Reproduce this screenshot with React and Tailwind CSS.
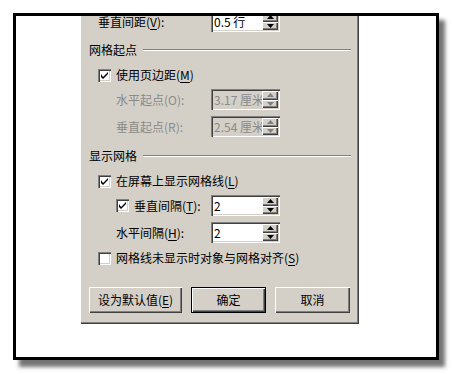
import React from "react";

const FONT = { fontFamily: '"Noto Sans CJK SC", "Liberation Sans", sans-serif' };

function U({ children }) {
  return <span className="underline underline-offset-2">{children}</span>;
}

function Spin({ disabled }) {
  const c = disabled ? "#808080" : "#000";
  const btn =
    "flex-1 flex items-center justify-center bg-[#d4d0c8] shadow-[inset_1px_1px_#fff,inset_-1px_-1px_#404040,inset_-2px_-2px_#808080]";
  return (
    <div className="absolute right-[2px] top-[2px] bottom-[2px] w-[16px] flex flex-col">
      <div className={btn}>
        <svg width="7" height="4" viewBox="0 0 7 4">
          <path d="M3.5 0 L7 4 L0 4 Z" fill={c} />
        </svg>
      </div>
      <div className={btn}>
        <svg width="7" height="4" viewBox="0 0 7 4">
          <path d="M0 0 L7 0 L3.5 4 Z" fill={c} />
        </svg>
      </div>
    </div>
  );
}

function Field({ value, disabled }) {
  return (
    <div
      className={
        "relative w-[69px] h-[21px] shadow-[inset_1px_1px_#808080,inset_2px_2px_#404040,inset_-1px_-1px_#fff,inset_-2px_-2px_#d4d0c8] " +
        (disabled ? "bg-[#d4d0c8] text-[#8a8a8a]" : "bg-white text-black")
      }
    >
      <div className="absolute left-[3px] top-[2px] bottom-[2px] right-[18px] overflow-hidden whitespace-nowrap flex items-center text-[12px] leading-none">
        {value}
      </div>
      <Spin disabled={disabled} />
    </div>
  );
}

function Check({ checked }) {
  return (
    <div className="w-[13px] h-[13px] shrink-0 bg-white shadow-[inset_1px_1px_#808080,inset_2px_2px_#404040,inset_-1px_-1px_#fff,inset_-2px_-2px_#d4d0c8] flex items-center justify-center">
      {checked && (
        <svg width="7" height="7" viewBox="0 0 7 7">
          <path d="M0 2 L0 5 L2 7 L7 2 L7 0 L2 5 Z" fill="#000" />
        </svg>
      )}
    </div>
  );
}

function Section({ children, className = "" }) {
  return (
    <div className={"flex items-center h-[16px] pl-[9px] pr-[8px] " + className}>
      <span className="text-[12px] leading-none whitespace-nowrap">{children}</span>
      <div className="flex-1 ml-[6px] h-[2px] border-t border-t-[#808080] border-b border-b-white" />
    </div>
  );
}

function Btn({ children, w, def }) {
  return (
    <div
      className={
        "h-[26px] flex items-center justify-center text-[12px] leading-none bg-[#d4d0c8] " +
        w +
        " " +
        (def
          ? "border border-black shadow-[inset_1px_1px_#fff,inset_-1px_-1px_#404040,inset_-2px_-2px_#808080]"
          : "shadow-[inset_1px_1px_#fff,inset_-1px_-1px_#404040,inset_-2px_-2px_#808080]")
      }
    >
      {children}
    </div>
  );
}

export default function App() {
  return (
    <div className="w-[452px] h-[374px] bg-white pt-[13px] pl-[13px]" style={FONT}>
      <div className="w-[426px] h-[347px] border-[3px] border-black bg-white shadow-[6px_7px_4px_rgba(0,0,0,0.55)] overflow-hidden">
        <div className="ml-[64px] w-[279px] h-[308px] bg-[#d4d0c8] text-black shadow-[inset_1px_0_#fff,inset_-1px_-1px_#404040,inset_-2px_-2px_#808080] flex flex-col">
          {/* row 1 */}
          <div className="flex items-center h-[21px] mt-[-5px] pl-[18px]">
            <span className="w-[113px] text-[12px] leading-none whitespace-nowrap">
              垂直间距(<U>V</U>):
            </span>
            <Field value="0.5 行" />
          </div>

          <Section className="mt-[10px]">网格起点</Section>

          <div className="flex items-center h-[16px] mt-[9px] pl-[18px]">
            <Check checked />
            <span className="ml-[5px] text-[12px] leading-none whitespace-nowrap">
              使用页边距(<U>M</U>)
            </span>
          </div>

          <div className="flex items-center h-[21px] mt-[6px] pl-[36px]">
            <span className="w-[95px] text-[12px] leading-none whitespace-nowrap text-[#8a8a8a]">
              水平起点(O):
            </span>
            <Field value="3.17 厘米" disabled />
          </div>

          <div className="flex items-center h-[21px] mt-[6px] pl-[36px]">
            <span className="w-[95px] text-[12px] leading-none whitespace-nowrap text-[#8a8a8a]">
              垂直起点(R):
            </span>
            <Field value="2.54 厘米" disabled />
          </div>

          <Section className="mt-[11px]">显示网格</Section>

          <div className="flex items-center h-[16px] mt-[9px] pl-[18px]">
            <Check checked />
            <span className="ml-[5px] text-[12px] leading-none whitespace-nowrap">
              在屏幕上显示网格线(<U>L</U>)
            </span>
          </div>

          <div className="flex items-center h-[21px] mt-[6px] pl-[36px]">
            <Check checked />
            <span className="ml-[5px] w-[77px] text-[12px] leading-none whitespace-nowrap">
              垂直间隔(<U>T</U>):
            </span>
            <Field value="2" />
          </div>

          <div className="flex items-center h-[21px] mt-[6px] pl-[36px]">
            <span className="w-[95px] text-[12px] leading-none whitespace-nowrap">
              水平间隔(<U>H</U>):
            </span>
            <Field value="2" />
          </div>

          <div className="flex items-center h-[16px] mt-[7px] pl-[18px]">
            <Check />
            <span className="ml-[5px] text-[12px] leading-none whitespace-nowrap">
              网格线未显示时对象与网格对齐(<U>S</U>)
            </span>
          </div>

          <div className="flex items-center mt-[21px] pl-[9px] gap-[9px]">
            <Btn w="w-[93px]">
              设为默认值(<U>E</U>)
            </Btn>
            <Btn w="w-[75px]" def>
              确定
            </Btn>
            <Btn w="w-[75px]">取消</Btn>
          </div>
        </div>
      </div>
    </div>
  );
}
